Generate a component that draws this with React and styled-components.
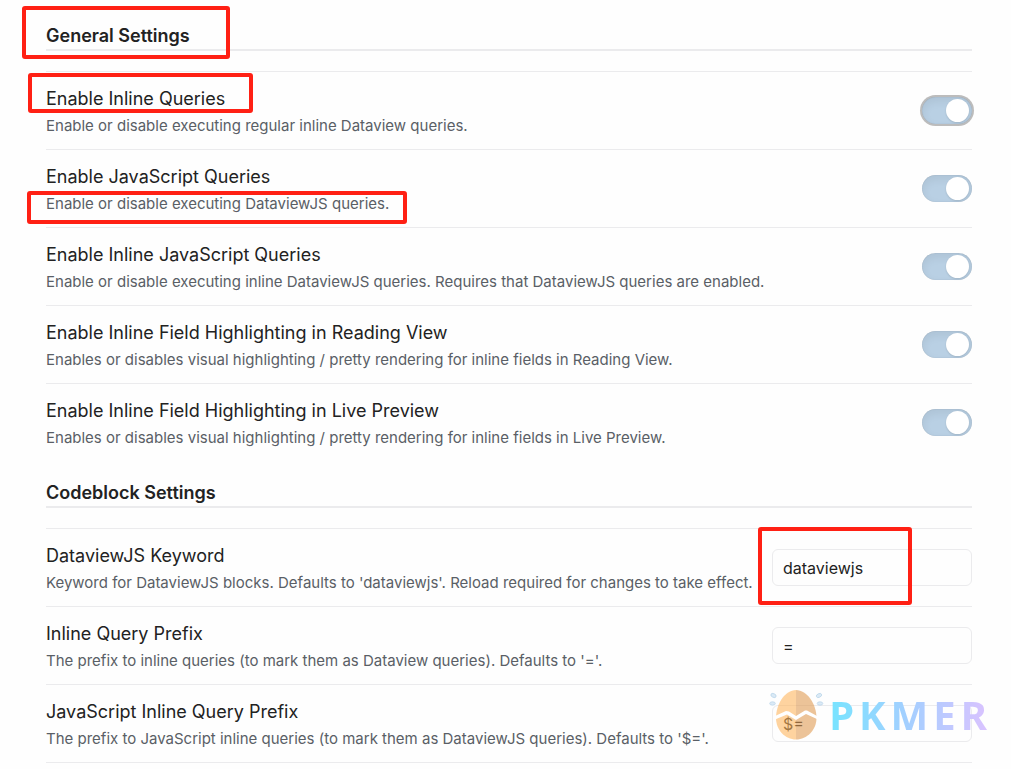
import React, { useState } from "react";
import styled, { createGlobalStyle } from "styled-components";

const colors = {
  text: "#222222",
  muted: "#5a5f66",
  line: "#ebebed",
  toggle: "#b9d0e4",
  mark: "#ff2014"
};

const GlobalStyle = createGlobalStyle`
  * {
    box-sizing: border-box;
  }

  body {
    margin: 0;
    background: #fefefe;
    color: ${colors.text};
    font-family: Inter, "Noto Sans", sans-serif;
    font-size: 15px;
    overflow: hidden;
  }
`;

const Page = styled.main`
  position: relative;
  padding: 20px 39px 0 46px;
`;

const Section = styled.section`
  margin-bottom: 16px;
`;

const SectionTitle = styled.h2`
  position: relative;
  margin: 0 0 20px;
  padding-top: 2px;
  border-bottom: 2px solid ${colors.line};
  font-size: 18px;
  font-weight: 600;
  line-height: 27px;
`;

const Row = styled.div`
  display: flex;
  align-items: center;
  justify-content: space-between;
  min-height: 78px;
  border-top: 1px solid ${colors.line};
`;

const Info = styled.div`
  min-width: 0;
  padding: 13px 0 11px;
`;

const Name = styled.label`
  position: relative;
  display: block;
  font-size: 18px;
  line-height: 28px;
`;

const Description = styled.div`
  position: relative;
  color: ${colors.muted};
  font-size: 15px;
  line-height: 25px;
`;

const Control = styled.div`
  position: relative;
  display: flex;
  flex: none;
`;

const Toggle = styled.input`
  appearance: none;
  display: flex;
  align-items: center;
  width: 50px;
  height: 27px;
  margin: 0;
  padding: 0 3px;
  border-radius: 14px;
  background: ${({ checked }) => (checked ? colors.toggle : "#d5d5d5")};
  box-shadow: inset 0 4px 10px rgba(0, 0, 0, 0.07),
    inset 0 0 1px rgba(0, 0, 0, 0.2)
    ${({ $ring }) => ($ring ? ", 0 0 0 2px #bcbcbc" : "")};
  cursor: pointer;

  &::before {
    content: "";
    width: 23px;
    height: 23px;
    margin-left: ${({ checked }) => (checked ? "21px" : "0")};
    border-radius: 50%;
    background: #ffffff;
    box-shadow: 0 1px 2px rgba(0, 0, 0, 0.12);
  }
`;

const TextInput = styled.input`
  width: 200px;
  height: 37px;
  padding: 0 10px;
  border: 1px solid ${colors.line};
  border-radius: 6px;
  background: transparent;
  color: ${colors.text};
  font-family: inherit;
  font-size: 16px;
`;

const Mark = styled.span`
  position: absolute;
  top: ${({ $top }) => $top}px;
  left: ${({ $left }) => $left}px;
  width: ${({ $width }) => $width}px;
  height: ${({ $height }) => $height}px;
  border: 4px solid ${colors.mark};
  border-radius: 3px;
  pointer-events: none;
`;

const Watermark = styled.div`
  position: absolute;
  right: 24px;
  bottom: 27px;
  display: flex;
  align-items: center;
  gap: 4px;
  pointer-events: none;
`;

const Egg = styled.svg`
  width: 56px;
  height: 54px;
`;

const Wordmark = styled.div`
  display: flex;
  gap: 5px;
  padding-top: 2px;
  background: linear-gradient(90deg, #77e4ff, #a4cfff 50%, #d9c3ff);
  background-clip: text;
  color: transparent;
  font-family: "Noto Sans", sans-serif;
  font-size: 40px;
  font-weight: 700;
  line-height: 54px;
`;

const toggles = [
  {
    id: "inline",
    name: "Enable Inline Queries",
    desc: "Enable or disable executing regular inline Dataview queries.",
    ring: true,
    nameMark: { $top: -12, $left: -18, $width: 225, $height: 40 }
  },
  {
    id: "js",
    name: "Enable JavaScript Queries",
    desc: "Enable or disable executing DataviewJS queries.",
    descMark: { $top: 0, $left: -19, $width: 380, $height: 33 }
  },
  {
    id: "inline-js",
    name: "Enable Inline JavaScript Queries",
    desc:
      "Enable or disable executing inline DataviewJS queries. Requires that DataviewJS queries are enabled."
  },
  {
    id: "reading",
    name: "Enable Inline Field Highlighting in Reading View",
    desc:
      "Enables or disables visual highlighting / pretty rendering for inline fields in Reading View."
  },
  {
    id: "preview",
    name: "Enable Inline Field Highlighting in Live Preview",
    desc:
      "Enables or disables visual highlighting / pretty rendering for inline fields in Live Preview."
  }
];

const fields = [
  {
    id: "keyword",
    name: "DataviewJS Keyword",
    desc:
      "Keyword for DataviewJS blocks. Defaults to 'dataviewjs'. Reload required for changes to take effect.",
    value: "dataviewjs",
    mark: { $top: -22, $left: -14, $width: 154, $height: 78 }
  },
  {
    id: "prefix",
    name: "Inline Query Prefix",
    desc:
      "The prefix to inline queries (to mark them as Dataview queries). Defaults to '='.",
    value: "="
  },
  {
    id: "js-prefix",
    name: "JavaScript Inline Query Prefix",
    desc:
      "The prefix to JavaScript inline queries (to mark them as DataviewJS queries). Defaults to '$='.",
    value: "$="
  }
];

const ToggleRow = ({ item }) => {
  const [on, setOn] = useState(true);

  return (
    <Row>
      <Info>
        <Name htmlFor={item.id}>
          {item.name}
          {item.nameMark && <Mark {...item.nameMark} />}
        </Name>
        <Description>
          {item.desc}
          {item.descMark && <Mark {...item.descMark} />}
        </Description>
      </Info>
      <Control>
        <Toggle
          id={item.id}
          type="checkbox"
          checked={on}
          $ring={item.ring}
          onChange={() => setOn(!on)}
        />
      </Control>
    </Row>
  );
};

const FieldRow = ({ item }) => (
  <Row>
    <Info>
      <Name htmlFor={item.id}>{item.name}</Name>
      <Description>{item.desc}</Description>
    </Info>
    <Control>
      <TextInput id={item.id} type="text" defaultValue={item.value} />
      {item.mark && <Mark {...item.mark} />}
    </Control>
  </Row>
);

const Logo = () => (
  <Watermark>
    <Egg viewBox="0 0 56 54" aria-hidden="true">
      <g opacity="0.58">
        <path d="M7 31C7 17 16 3 27 3V52.5C16 52.5 7 43 7 31Z" fill="#ffb55c" />
        <path
          d="M27 3C38 3 47.5 17 47.5 31C47.5 43 38 52.5 27 52.5Z"
          fill="#e09a50"
        />
      </g>
      <path
        d="M6 29L17 24L20 24.5L27 29L36 23.5L38 23.5L49 29.5V32.5L37 27L27 33L18 27.500L6 32.500Z"
        fill="#ffffff"
      />
      <g fill="#dbeaf6" stroke="#bcd6ea" strokeWidth="0.8">
        <ellipse cx="4.5" cy="8.5" rx="2.8" ry="1.8" transform="rotate(25 4.5 8.5)" />
        <ellipse cx="3.5" cy="16.5" rx="2.8" ry="1.7" />
        <ellipse cx="50" cy="8.5" rx="2.8" ry="1.8" transform="rotate(-25 50 8.5)" />
        <ellipse cx="51" cy="16.5" rx="2.8" ry="1.7" />
      </g>
    </Egg>
    <Wordmark>
      {["P", "K", "M", "E", "R"].map(letter => (
        <span key={letter}>{letter}</span>
      ))}
    </Wordmark>
  </Watermark>
);

const Bottom = styled.div`
  border-top: 1px solid ${colors.line};
  height: 7px;
`;

const App = () => (
  <Page>
    <GlobalStyle />
    <Section>
      <SectionTitle>
        General Settings
        <Mark $top={-14} $left={-24} $width={208} $height={53} />
      </SectionTitle>
      {toggles.map(item => (
        <ToggleRow key={item.id} item={item} />
      ))}
    </Section>
    <Section>
      <SectionTitle>Codeblock Settings</SectionTitle>
      {fields.map(item => (
        <FieldRow key={item.id} item={item} />
      ))}
      <Bottom />
    </Section>
    <Logo />
  </Page>
);

export default App;
